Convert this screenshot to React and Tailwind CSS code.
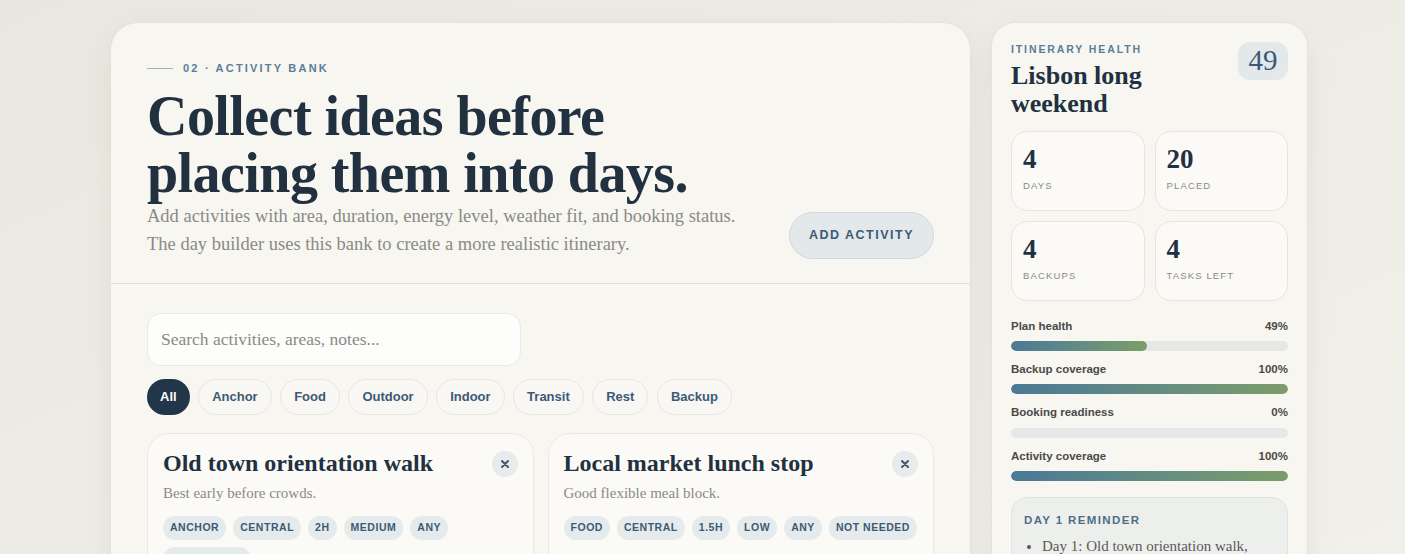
import React from "react";

const serif = { fontFamily: '"Liberation Serif", "DejaVu Serif", serif' };
const sans = { fontFamily: '"Liberation Sans", Arial, sans-serif' };

const filters = ["All", "Anchor", "Food", "Outdoor", "Indoor", "Transit", "Rest", "Backup"];

const activities = [
  {
    title: "Old town orientation walk",
    note: "Best early before crowds.",
    tags: ["Anchor", "Central", "2h", "Medium", "Any", "Not needed"],
  },
  {
    title: "Local market lunch stop",
    note: "Good flexible meal block.",
    tags: ["Food", "Central", "1.5h", "Low", "Any", "Not needed"],
  },
];

const stats = [
  { value: "4", label: "Days" },
  { value: "20", label: "Placed" },
  { value: "4", label: "Backups" },
  { value: "4", label: "Tasks left" },
];

const bars = [
  { label: "Plan health", value: 49 },
  { label: "Backup coverage", value: 100 },
  { label: "Booking readiness", value: 0 },
  { label: "Activity coverage", value: 100 },
];

const ActivityCard = ({ item }) => (
  <div className="rounded-[22px] border border-[#ebe9e2] bg-[#fbfaf6] px-[15px] pt-[14px] pb-5">
    <div className="flex items-start justify-between">
      <h3 className="text-[24px] leading-[30px] font-bold text-[#22313f]" style={serif}>
        {item.title}
      </h3>
      <button className="mt-[3px] flex h-[26px] w-[26px] items-center justify-center rounded-full bg-[#e8ebeb] text-[#3c5a75]">
        <svg width="10" height="10" viewBox="0 0 10 10" fill="none" stroke="currentColor" strokeWidth="2" strokeLinecap="round">
          <path d="M2 2l6 6M8 2l-6 6" />
        </svg>
      </button>
    </div>
    <p className="mt-[4px] text-[15px] text-[#8a8a85]" style={serif}>
      {item.note}
    </p>
    <div className="mt-[12px] flex flex-wrap gap-[7px]">
      {item.tags.map((t) => (
        <span
          key={t}
          className="flex h-[24px] items-center rounded-full bg-[#e5eaed] px-[7px] text-[10.5px] font-bold uppercase tracking-[0.05em] text-[#3c5a75]"
          style={sans}
        >
          {t}
        </span>
      ))}
    </div>
  </div>
);

export default function App() {
  return (
    <div className="min-h-screen overflow-hidden bg-gradient-to-br from-[#e9e8e0] to-[#f1f0ea] pl-[110px] pt-[22px]">
      <div className="flex gap-[20px]">
        {/* main panel */}
        <div className="w-[861px] shrink-0 rounded-[28px] border border-[#e4e2da] bg-[#f7f6f1] shadow-[0_10px_30px_rgba(60,60,40,0.06)]">
          <div className="border-b border-[#e2e0d9] px-[36px] pt-[37px] pb-[24px]">
            <div className="flex items-center gap-[10px]">
              <span className="h-px w-[26px] bg-[#9fb1bf]" />
              <span className="text-[11px] font-bold uppercase tracking-[0.2em] text-[#5a7d9a]" style={sans}>
                02 · Activity Bank
              </span>
            </div>
            <h1 className="mt-[11px] text-[56px] leading-[57px] font-bold tracking-[-0.01em] text-[#22313f]" style={serif}>
              Collect ideas before
              <br />
              placing them into days.
            </h1>
            <div className="flex items-center justify-between">
              <p className="text-[18.5px] leading-[28px] text-[#8a8a85]" style={serif}>
                Add activities with area, duration, energy level, weather fit, and booking status.
                <br />
                The day builder uses this bank to create a more realistic itinerary.
              </p>
              <button
                className="mt-[10px] h-[47px] rounded-full border border-[#d0d9de] bg-[#e3e8ea] px-[19px] text-[12.5px] font-bold uppercase tracking-[0.12em] text-[#3c5a75]"
                style={sans}
              >
                Add Activity
              </button>
            </div>
          </div>

          <div className="px-[36px] pt-[29px] pb-6">
            <div
              className="flex h-[53px] w-[374px] items-center rounded-[14px] border border-[#ebe9e3] bg-[#fdfdfb] px-[13px] text-[17.5px] text-[#8a8a85]"
              style={serif}
            >
              Search activities, areas, notes...
            </div>
            <div className="mt-[13px] flex gap-[8.5px]">
              {filters.map((f, i) => (
                <span
                  key={f}
                  className={
                    i === 0
                      ? "flex h-[36px] items-center rounded-full bg-[#22364a] px-[13px] text-[13px] font-bold text-white"
                      : "flex h-[36px] items-center rounded-full border border-[#e8e6df] bg-[#f8f7f3] px-[13px] text-[13px] font-bold text-[#3c5a75]"
                  }
                  style={sans}
                >
                  {f}
                </span>
              ))}
            </div>
            <div className="mt-[18px] grid grid-cols-2 gap-[14px]">
              {activities.map((a) => (
                <ActivityCard key={a.title} item={a} />
              ))}
            </div>
          </div>
        </div>

        {/* side panel */}
        <div className="w-[317px] shrink-0 rounded-[24px] border border-[#e4e2da] bg-[#f7f6f1] px-[19px] pt-[19px] pb-6 shadow-[0_10px_30px_rgba(60,60,40,0.06)]">
          <div className="flex items-start justify-between">
            <div>
              <div className="text-[10.5px] font-bold uppercase tracking-[0.18em] text-[#5a7d9a]" style={sans}>
                Itinerary Health
              </div>
              <h2 className="mt-[4px] text-[26px] leading-[28px] font-bold text-[#22313f]" style={serif}>
                Lisbon long
                <br />
                weekend
              </h2>
            </div>
            <div
              className="flex h-[38px] w-[50px] items-center justify-center rounded-[12px] bg-[#e3e8eb] text-[29px] text-[#3c5a75]"
              style={serif}
            >
              49
            </div>
          </div>

          <div className="mt-[13px] grid grid-cols-2 gap-[10px]">
            {stats.map((s) => (
              <div key={s.label} className="h-[80px] rounded-[16px] border border-[#e6e4dd] bg-[#fbfaf6] px-[11px] pt-[12px]">
                <div className="text-[27px] leading-[30px] font-bold text-[#22313f]" style={serif}>
                  {s.value}
                </div>
                <div className="mt-[5px] text-[9.5px] uppercase tracking-[0.12em] text-[#8a8a85]" style={sans}>
                  {s.label}
                </div>
              </div>
            ))}
          </div>

          <div className="mt-[17px] flex flex-col gap-[10px]">
            {bars.map((b) => (
              <div key={b.label}>
                <div className="flex justify-between text-[11.5px] font-bold text-[#4a4a47]" style={sans}>
                  <span>{b.label}</span>
                  <span>{b.value}%</span>
                </div>
                <div className="mt-[6px] h-[10px] overflow-hidden rounded-full bg-[#e6e8e7]">
                  <div
                    className="h-full rounded-full bg-gradient-to-r from-[#4b7896] to-[#7c9d69]"
                    style={{ width: `${b.value}%` }}
                  />
                </div>
              </div>
            ))}
          </div>

          <div className="mt-[16px] rounded-[16px] border border-[#dfe2de] bg-[#edefec] px-[12px] pt-[14px] pb-4">
            <div className="text-[11.5px] font-bold uppercase tracking-[0.12em] text-[#4e6e86]" style={sans}>
              Day 1 Reminder
            </div>
            <ul className="mt-[6px] list-disc pl-[18px] text-[15px] leading-[22px] text-[#5a5a56]" style={serif}>
              <li>Day 1: Old town orientation walk, Local market lunch stop</li>
            </ul>
          </div>
        </div>
      </div>
    </div>
  );
}
